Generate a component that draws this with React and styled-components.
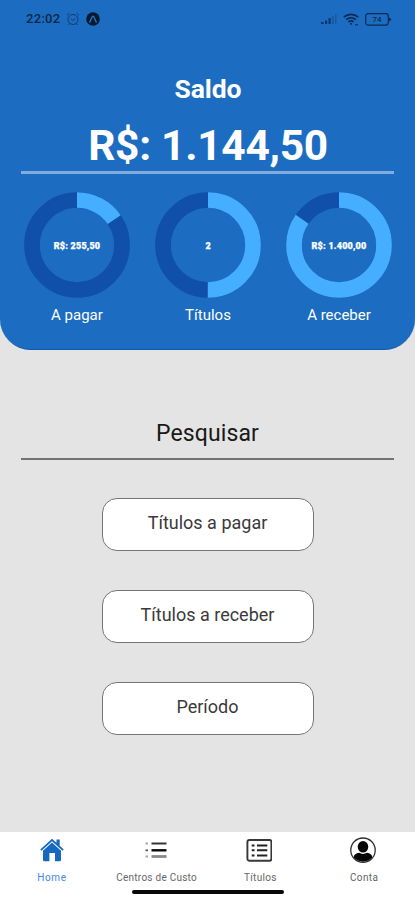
import React from "react";
import styled, { createGlobalStyle } from "styled-components";

const GlobalStyle = createGlobalStyle`
  * { box-sizing: border-box; }
  body { margin: 0; background: #e4e4e4; font-family: Roboto, "Liberation Sans", sans-serif; }
  svg { display: block; }
`;

const Screen = styled.main`
  display: flex;
  flex-direction: column;
  width: 415px;
  height: 900px;
  overflow: hidden;
  background: #e4e4e4;
`;

const Header = styled.header`
  height: 350px;
  padding: 0 21px;
  background: #1c6dc1;
  border-bottom: 1px solid #1258ad;
  border-radius: 0 0 31px 31px;
  color: #fff;
`;

const StatusBar = styled.div`
  display: flex;
  justify-content: space-between;
  height: 74px;
  padding: 9px 2px 0 5px;
  color: #0c2748;
`;

const StatusGroup = styled.div`
  display: flex;
  align-items: center;
  gap: ${(p) => p.$gap}px;
  height: 20px;
`;

const Clock = styled.span`
  font-size: 13px;
  font-weight: 500;
  line-height: 20px;
  letter-spacing: 0.3px;
`;

const Title = styled.h1`
  margin: 0;
  padding-left: 1px;
  font-size: 26.5px;
  font-weight: 700;
  line-height: 30px;
  letter-spacing: -0.1px;
  text-align: center;
`;

const Balance = styled.div`
  height: 67px;
  padding: 17px 0 0 1px;
  font-size: 42.5px;
  font-weight: 700;
  line-height: 50px;
  letter-spacing: -0.3px;
  text-align: center;
  white-space: nowrap;
`;

const Rule = styled.div`
  height: ${(p) => p.$size}px;
  background: ${(p) => p.$color};
`;

const Charts = styled.section`
  display: flex;
  justify-content: space-between;
  padding: 18px 2px 0 3px;
`;

const Chart = styled.div`
  width: 106px;
  text-align: center;
`;

const ChartValue = styled.text`
  fill: #fff;
  stroke: #fff;
  stroke-width: 0.25px;
  font-size: 9px;
  font-weight: 900;
  letter-spacing: ${(p) => p.$spacing}px;
  text-anchor: middle;
`;

const ChartLabel = styled.div`
  padding-top: 7px;
  font-size: 15px;
  line-height: 20px;
`;

const Search = styled.section`
  flex: 1;
  padding: 67px 21px 0;
`;

const SearchTitle = styled.h2`
  margin: 0;
  height: 41px;
  color: #191919;
  font-size: 23px;
  font-weight: 400;
  line-height: 33px;
  letter-spacing: 0.1px;
  text-align: center;
`;

const Actions = styled.div`
  display: flex;
  flex-direction: column;
  align-items: center;
  gap: 39px;
  padding-top: 38px;
`;

const Action = styled.button`
  width: 212px;
  height: 53px;
  padding: 0 0 4px;
  border: 1px solid #757575;
  border-radius: 15px;
  background: #fff;
  color: #3a3a3a;
  font-family: inherit;
  font-size: 18px;
`;

const Footer = styled.footer`
  height: 68px;
  background: #fff;
`;

const Tabs = styled.nav`
  display: grid;
  grid-template-columns: repeat(4, 1fr);
  height: 58px;
`;

const Tab = styled.a`
  display: flex;
  flex-direction: column;
  align-items: center;
  padding-top: 4px;
  color: ${(p) => (p.$active ? "#1768c0" : "#111")};
`;

const TabLabel = styled.span`
  margin-top: 6px;
  padding-left: ${(p) => (p.$active ? 0 : 2)}px;
  color: ${(p) => (p.$active ? "#3c8ae0" : "#666")};
  font-size: 10px;
  line-height: 15px;
  letter-spacing: ${(p) => p.$spacing}px;
  white-space: nowrap;
`;

const HomeIndicator = styled.div`
  width: 152px;
  height: 4px;
  margin: 0 auto;
  border-radius: 2px;
  background: #080808;
`;

const AlarmIcon = () => (
  <svg width="14" height="14" viewBox="0 0 14 14" fill="none" stroke="#0f3c70" strokeWidth="1">
    <circle cx="7" cy="7.5" r="5" />
    <path d="M1 3.3 3.4 1.2M10.6 1.2 13 3.3M4.8 6.7 6.7 8.5 9.4 6.7M3.5 11.5 2.4 13M10.5 11.5 11.6 13" />
  </svg>
);

const ExpoIcon = () => (
  <svg width="14" height="14" viewBox="0 0 14 14">
    <circle cx="7" cy="7" r="6.8" fill="#071a30" />
    <path d="M3.7 10C5 8.5 5.6 4.2 7 4.2S9 8.5 10.3 10" fill="none" stroke="#2d71b8" strokeWidth="1.5" strokeLinecap="round" />
  </svg>
);

const SignalIcon = () => (
  <svg width="16" height="12" viewBox="0 0 16 12">
    <path d="M0 9h2.5v2H0zM4 7.5h2.2V11H4zM7.5 5h2.2v6H7.5z" fill="#0d3769" />
    <path d="M11 3h1.8v8H11zM14 1h1.5v10H14z" fill="#1859a0" />
  </svg>
);

const WifiIcon = () => (
  <svg width="16" height="13" viewBox="0 0 16 13" fill="none" stroke="#0b2b52" strokeWidth="1.7">
    <path d="M.8 4.2C4.8.5 11.2.5 15.2 4.2M3.2 6.7c2.8-2.4 6.8-2.4 9.6 0M5.4 9c1.5-1.2 3.7-1.2 5.2 0" />
    <circle cx="8" cy="10.8" r="1" fill="#0b2b52" stroke="none" />
    <path d="M12 11.8h3" strokeWidth="1" />
  </svg>
);

const BatteryText = styled.text`
  fill: #0b2b52;
  font-size: 8px;
  font-weight: 500;
  text-anchor: middle;
`;

const BatteryIcon = () => (
  <svg width="27" height="13" viewBox="0 0 27 13">
    <rect x=".7" y=".7" width="22.6" height="11.4" rx="2.5" fill="none" stroke="#0b2b52" strokeWidth="1.2" />
    <path d="M24 4.2 26.5 6.5 24 8.8z" fill="#0b2b52" />
    <BatteryText x="12" y="9.3">74</BatteryText>
  </svg>
);

const RADIUS = 45;
const LENGTH = 2 * Math.PI * RADIUS;

const Donut = ({ share, value, spacing }) => (
  <svg width="106" height="106" viewBox="0 0 106 106">
    <circle cx="53" cy="53" r={RADIUS} fill="none" stroke="#104faa" strokeWidth="15.7" />
    <circle
      cx="53" cy="53" r={RADIUS} fill="none" stroke="#46aeff" strokeWidth="15.7"
      strokeDasharray={`${LENGTH * share} ${LENGTH}`} transform="rotate(-90 53 53)"
    />
    <ChartValue x="53" y="56.5" $spacing={spacing}>{value}</ChartValue>
  </svg>
);

const HomeIcon = () => (
  <svg width="26" height="28" viewBox="0 0 26 28" fill="currentColor">
    <path d="M13 2.7 17.5 6.7V3.5h3.2v6.2L24.7 13.4l-1.2 1.3L13 5.2 2.5 14.7 1.3 13.4z" />
    <path d="M13 6.6 22 14.8V24q0 1.2-1.2 1.2H16V17h-5.6v8.2H5.2Q4 25.2 4 24v-9.2z" />
  </svg>
);

const ListIcon = () => (
  <svg width="26" height="28" viewBox="0 0 26 28">
    <path d="M8.5 7.5h15" stroke="#353535" strokeWidth="2" />
    <path d="M8.5 14.3h15" stroke="#080808" strokeWidth="2.4" />
    <path d="M8.5 20.5h15" stroke="#898989" strokeWidth="2.8" />
    <path d="M2.5 7.5H5M2.5 20.5H5" stroke="#aaa" strokeWidth="2" />
    <path d="M2.5 14.3H5" stroke="#555" strokeWidth="1.8" />
  </svg>
);

const ListBoxIcon = () => (
  <svg width="26" height="28" viewBox="0 0 26 28" fill="none">
    <rect x="1.4" y="4" width="24" height="20.7" rx="2" stroke="#373737" strokeWidth="1.9" />
    <path d="M11 9.5h10.3M11 14.3h10.3M11 19.4h10.3M5.7 9.5h2.8M5.7 14.3h2.8M5.7 19.4h2.8" stroke="#222" strokeWidth="2" />
  </svg>
);

const AccountIcon = () => (
  <svg width="26" height="28" viewBox="0 0 26 28">
    <circle cx="13" cy="14.2" r="12.2" fill="none" stroke="#303030" strokeWidth="1.3" />
    <ellipse cx="13" cy="10.8" rx="5.3" ry="5.8" fill="#050505" />
    <path d="M3.6 21.3C4.2 18.2 6 17.6 9 16.8q4 2.2 8 0c3 .8 4.8 1.4 5.4 4.5A12.2 12.2 0 0 1 3.6 21.3z" fill="#050505" />
  </svg>
);

const charts = [
  { label: "A pagar", value: "R$: 255,50", share: 0.1543, spacing: 0.2 },
  { label: "Títulos", value: "2", share: 0.5, spacing: 0 },
  { label: "A receber", value: "R$: 1.400,00", share: 0.8457, spacing: 0.2 },
];

const tabs = [
  { label: "Home", Icon: HomeIcon, active: true, spacing: 0.6 },
  { label: "Centros de Custo", Icon: ListIcon, spacing: 0.25 },
  { label: "Títulos", Icon: ListBoxIcon, spacing: 0.3 },
  { label: "Conta", Icon: AccountIcon, spacing: 0.4 },
];

export default function App() {
  return (
    <>
      <GlobalStyle />
      <Screen>
        <Header>
          <StatusBar>
            <StatusGroup $gap={6}>
              <Clock>22:02</Clock>
              <AlarmIcon />
              <ExpoIcon />
            </StatusGroup>
            <StatusGroup $gap={6}>
              <SignalIcon />
              <WifiIcon />
              <BatteryIcon />
            </StatusGroup>
          </StatusBar>
          <Title>Saldo</Title>
          <Balance>R$: 1.144,50</Balance>
          <Rule $size={3} $color="#83acde" />
          <Charts>
            {charts.map((c) => (
              <Chart key={c.label}>
                <Donut share={c.share} value={c.value} spacing={c.spacing} />
                <ChartLabel>{c.label}</ChartLabel>
              </Chart>
            ))}
          </Charts>
        </Header>
        <Search>
          <SearchTitle>Pesquisar</SearchTitle>
          <Rule $size={2} $color="#737373" />
          <Actions>
            <Action>Títulos a pagar</Action>
            <Action>Títulos a receber</Action>
            <Action>Período</Action>
          </Actions>
        </Search>
        <Footer>
          <Tabs>
            {tabs.map(({ label, Icon, active, spacing }) => (
              <Tab key={label} $active={active}>
                <Icon />
                <TabLabel $active={active} $spacing={spacing}>{label}</TabLabel>
              </Tab>
            ))}
          </Tabs>
          <HomeIndicator />
        </Footer>
      </Screen>
    </>
  );
}
